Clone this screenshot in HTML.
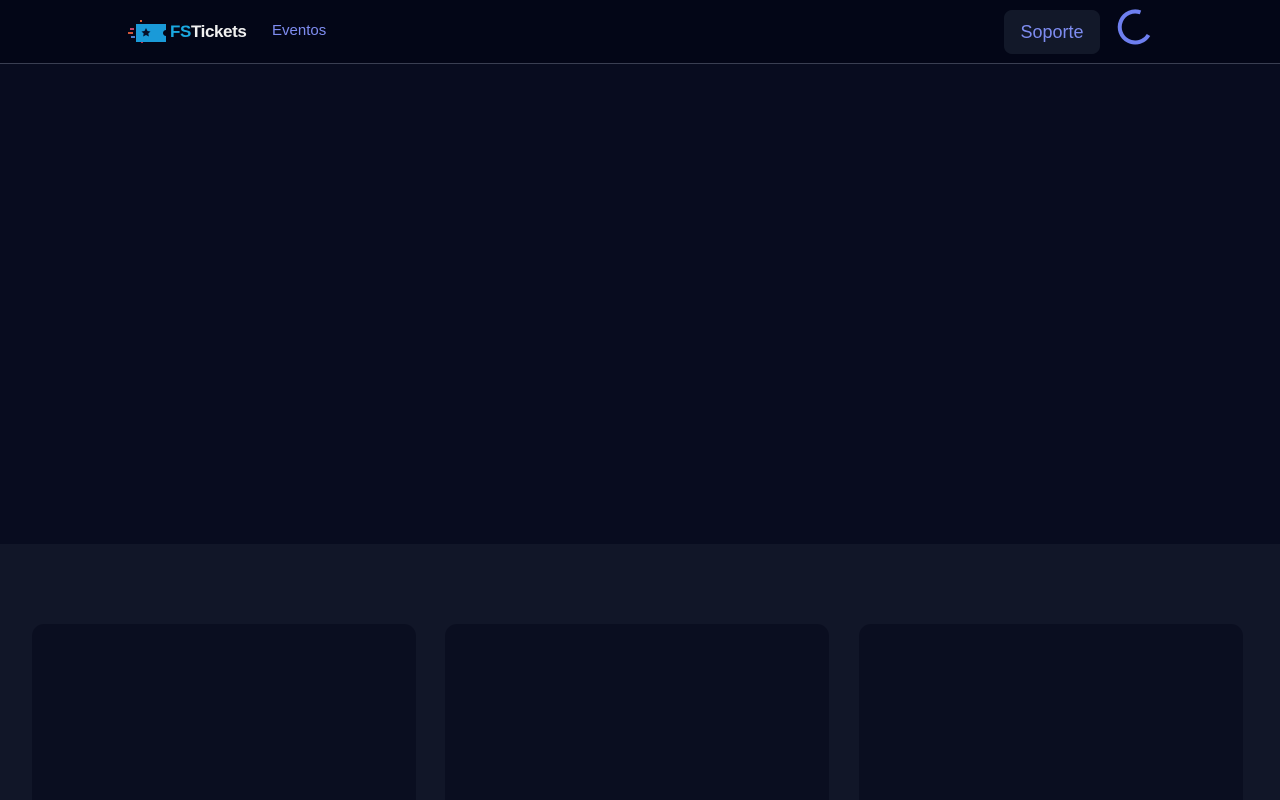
<!DOCTYPE html>
<html><head><meta charset="utf-8"><style>
*{margin:0;padding:0;box-sizing:border-box}
html,body{width:1280px;height:800px;overflow:hidden}
body{position:relative;background:#111628;font-family:"Liberation Sans",sans-serif}
.hdr{position:absolute;left:0;top:0;width:1280px;height:64px;background:#030617;border-bottom:1px solid #3a3f52}
.hero{position:absolute;left:0;top:64px;width:1280px;height:480px;background:#080c1f}
.card{position:absolute;top:624px;width:384px;height:176px;background:#0a0e20;border-radius:12px 12px 0 0}
.logo{position:absolute;left:128px;top:19px;display:flex;align-items:center}
.logo span{font-weight:bold;font-size:17px;letter-spacing:-0.4px}
.ev{position:absolute;left:272px;top:22px;font-size:15px;color:#7e8cf0}
.btn{position:absolute;left:1004px;top:10px;width:96px;height:44px;background:#121829;border-radius:8px;color:#7e8cf0;font-size:18px;text-align:center;line-height:44px}
</style></head><body>
<div class="hdr">
 <div class="logo">
  <svg width="40" height="26" viewBox="0 0 40 26">
   <rect x="2" y="9" width="4" height="2" fill="#c0466a"/><rect x="0" y="13" width="5" height="2" fill="#d0563a"/><rect x="3" y="17" width="4" height="2" fill="#4a80d0"/>
   <rect x="12" y="1" width="2" height="2" fill="#e06030"/><rect x="13" y="22" width="2" height="2" fill="#c03050"/>
   <path d="M8 5h30v6a3 3 0 0 0 0 6v6H8z" fill="#1a9ad8"/>
   <path d="M18 9l1.5 3 3 .5-2.2 2 .6 3-2.9-1.5-2.9 1.5.6-3-2.2-2 3-.5z" fill="#06102a"/>
  </svg>
  <span style="color:#1aa8e0;margin-left:2px">FS</span><span style="color:#f0f0f0">Tickets</span>
 </div>
 <div class="ev">Eventos</div>
 <div class="btn">Soporte</div>
 <svg style="position:absolute;left:1114px;top:8px" width="40" height="40" viewBox="0 0 40 40">
  <path d="M26.5 4.4A15.5 15.5 0 1 0 34.5 27" fill="none" stroke="#6e7ff0" stroke-width="4"/>
 </svg>
</div>
<div class="hero"></div>
<div class="card" style="left:32px"></div>
<div class="card" style="left:445px"></div>
<div class="card" style="left:859px"></div>
</body></html>
